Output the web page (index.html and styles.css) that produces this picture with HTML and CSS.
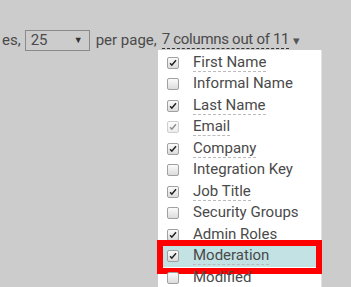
FILE: index.html
```html
<!DOCTYPE html>
<html lang="en">
<head>
    <meta charset="UTF-8">
    <title>Columns</title>
    <link rel="stylesheet" href="styles.css">
</head>
<body>
    <div class="toolbar">
        <span>es,</span>
        <div class="select">
            <span>25</span>
            <span class="select-arrow">&#9660;</span>
        </div>
        <span>per page,</span>
        <span class="columns-toggle">7 columns out of 11</span>
        <span class="caret">&#9662;</span>
    </div>

    <div class="menu">
        <div class="item"><span class="box checked"></span><span class="label on">First Name</span></div>
        <div class="item"><span class="box"></span><span class="label">Informal Name</span></div>
        <div class="item"><span class="box checked"></span><span class="label on">Last Name</span></div>
        <div class="item"><span class="box checked disabled"></span><span class="label on">Email</span></div>
        <div class="item"><span class="box checked"></span><span class="label on">Company</span></div>
        <div class="item"><span class="box"></span><span class="label">Integration Key</span></div>
        <div class="item"><span class="box checked"></span><span class="label on">Job Title</span></div>
        <div class="item"><span class="box"></span><span class="label">Security Groups</span></div>
        <div class="item"><span class="box checked"></span><span class="label on">Admin Roles</span></div>
        <div class="item highlight"><span class="box checked"></span><span class="label on">Moderation</span></div>
        <div class="item"><span class="box"></span><span class="label">Modified</span></div>
    </div>
</body>
</html>
```

FILE: styles.css
```css
body {
    margin: 0;
    background: #cccccc;
    font-family: Roboto, "Liberation Sans", sans-serif;
    font-size: 15px;
    color: #4a4a4a;
    overflow: hidden;
}

.toolbar {
    display: flex;
    align-items: center;
    height: 20px;
    margin-top: 30px;
    margin-left: 2px;
    white-space: nowrap;
}

.select {
    display: flex;
    align-items: center;
    justify-content: space-between;
    box-sizing: border-box;
    width: 65px;
    height: 21px;
    margin: 0 6px 0 4px;
    padding: 0 6px 0 5px;
    border: 1px solid #8a8a8a;
}

.select-arrow {
    font-size: 9px;
    color: #333;
}

.columns-toggle {
    margin-left: 5px;
    letter-spacing: -0.3px;
    line-height: 17px;
    border-bottom: 1px dashed #333;
}

.caret {
    margin-left: 4px;
    font-size: 13px;
    color: #555;
}

.menu {
    box-sizing: border-box;
    width: 164px;
    margin: 0 0 0 158px;
    padding-top: 2px;
    background: white;
    border-right: 1px solid #e2e2e2;
}

.item {
    position: relative;
    display: flex;
    align-items: center;
    height: 21.5px;
    padding-left: 9px;
}

.box {
    box-sizing: border-box;
    width: 12px;
    height: 12px;
    margin-right: 14px;
    border: 1px solid #a0a0a0;
    border-radius: 2px;
    background: linear-gradient(#fbfbfb, #dcdcdc);
}

.box.checked {
    background: url("data:image/svg+xml,%3Csvg xmlns='http://www.w3.org/2000/svg' viewBox='0 0 12 12'%3E%3Cpath d='M2.5 6.2 L4.6 8.6 L9.6 2.6' fill='none' stroke='%23222' stroke-width='1.8'/%3E%3C/svg%3E") no-repeat center / 10px, linear-gradient(#fbfbfb, #dcdcdc);
}

.box.checked.disabled {
    opacity: 0.5;
}

.label {
    line-height: 17px;
    border-bottom: 1px solid transparent;
}

.label.on {
    border-bottom: 1px dashed #bbbbbb;
}

.highlight {
    background: #c2e2e3;
}

.highlight::after {
    content: '';
    position: absolute;
    top: -6px;
    bottom: -7px;
    left: -1px;
    right: -1px;
    border: 6px solid red;
}
```
